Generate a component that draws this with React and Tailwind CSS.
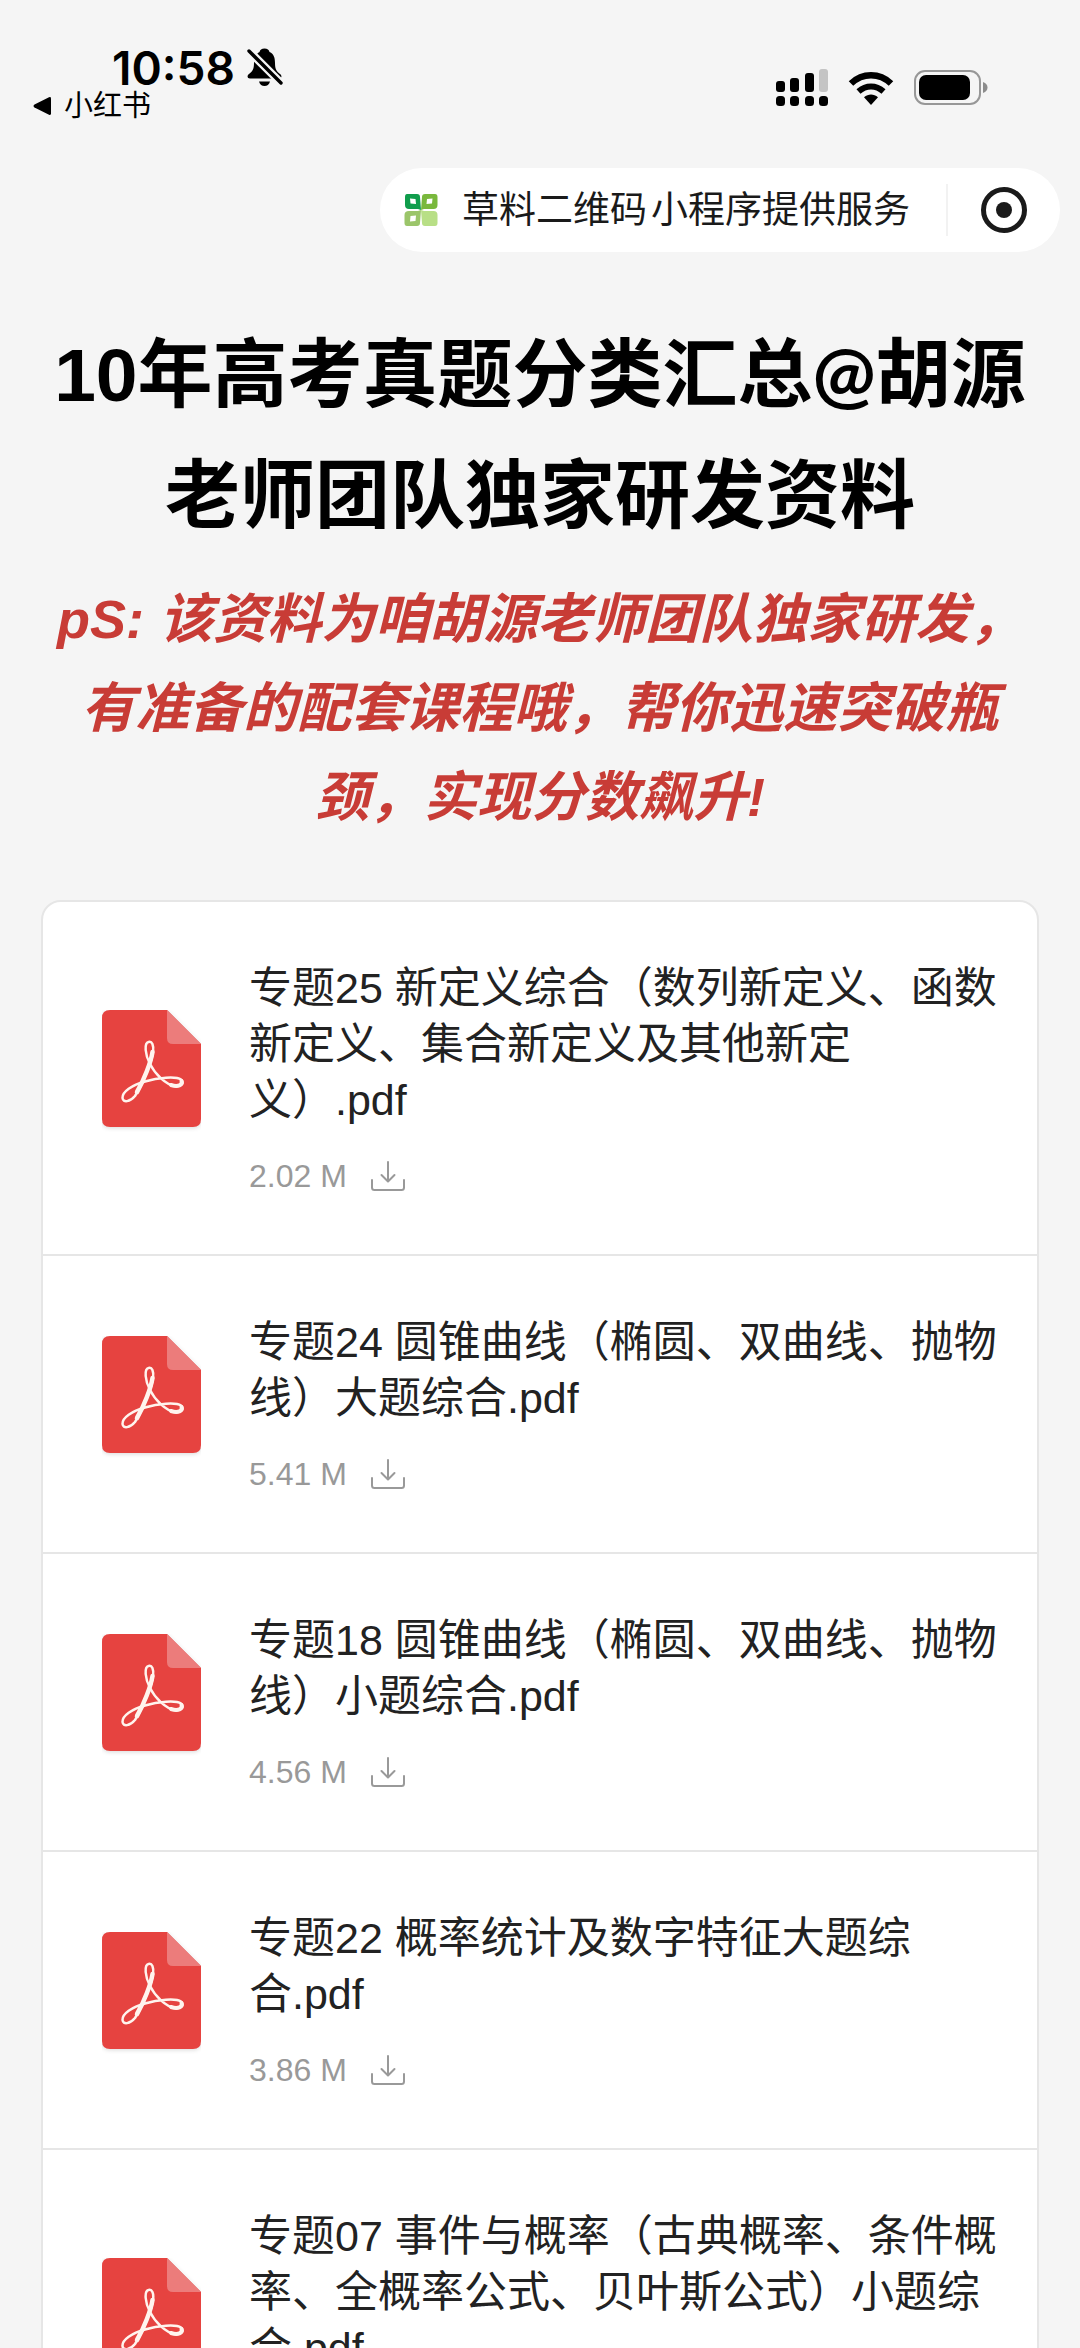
const files = [
  { name: "专题25 新定义综合（数列新定义、函数新定义、集合新定义及其他新定义）.pdf", size: "2.02 M" },
  { name: "专题24 圆锥曲线（椭圆、双曲线、抛物线）大题综合.pdf", size: "5.41 M" },
  { name: "专题18 圆锥曲线（椭圆、双曲线、抛物线）小题综合.pdf", size: "4.56 M" },
  { name: "专题22 概率统计及数字特征大题综合.pdf", size: "3.86 M" },
  { name: "专题07 事件与概率（古典概率、条件概率、全概率公式、贝叶斯公式）小题综合.pdf", size: "2.97 M" },
];

const BellOff = () => (
  <svg width="36" height="40" viewBox="0 0 36 40" fill="currentColor" aria-hidden="true">
    <path d="M17.500 .5c3 0 4.500 1.500 5 3.500C27 6 28 10 28 15c0 6 1.500 8.500 5 11 2.500 2 1.500 4.500-1 4.500H3C.5 30.500-.5 28 2 26c3.500-2.500 5-5 5-11 0-5 2-9 5.500-11 .5-2 2-3.500 5-3.500z" />
    <path d="M12 33.500h11c-.8 3-2.800 4.500-5.500 4.500s-4.700-1.500-5.500-4.500z" />
    <path d="M0 1 36 37" stroke="#f5f5f5" strokeWidth="8" />
    <path d="M2 3 34 35" stroke="currentColor" strokeWidth="3.400" strokeLinecap="round" />
  </svg>
);

const Signal = () => (
  <svg width="52" height="38" viewBox="0 0 52 38" fill="currentColor" aria-hidden="true">
    <rect x="0" y="12" width="9" height="11" rx="3" />
    <rect x="14" y="9" width="9" height="14" rx="3" />
    <rect x="29" y="4" width="9" height="19" rx="3" />
    <rect x="43" y="0" width="9" height="23" rx="3" fill="#c4c4c4" />
    <rect x="0" y="27" width="9" height="10" rx="3.500" />
    <rect x="14" y="27" width="9" height="10" rx="3.500" />
    <rect x="29" y="27" width="9" height="10" rx="3.500" />
    <rect x="43" y="27" width="9" height="10" rx="3.500" />
  </svg>
);

const Wifi = () => (
  <svg width="46" height="34" viewBox="0 0 46 34" aria-hidden="true">
    <path d="M3 12.500C14.500 1.500 31.500 1.500 43 12.500" fill="none" stroke="currentColor" strokeWidth="6.500" />
    <path d="M10.500 20.500C18 13.700 28 13.700 35.500 20.500" fill="none" stroke="currentColor" strokeWidth="6" />
    <path d="M16 26.200C20.500 22.500 25.500 22.500 30 26.200L23 34z" fill="currentColor" />
  </svg>
);

const Battery = () => (
  <svg width="74" height="36" viewBox="0 0 74 36" aria-hidden="true">
    <rect x="1" y="1" width="65" height="33" rx="10" fill="none" stroke="#979797" strokeWidth="2" />
    <rect x="5" y="5" width="51" height="25" rx="7" fill="currentColor" />
    <path d="M69 12c3 1 4.500 3 4.500 5.500S72 22 69 23z" fill="#8c8c8c" />
  </svg>
);

const CloverLogo = () => (
  <svg width="34" height="34" viewBox="0 0 34 34" fillRule="evenodd" aria-hidden="true">
    <path fill="#109d4c" d="M3 1h10q3 0 3 3l1 13-3-1H5q-4 0-4-4V4q0-3 2-3zM6 5.500l.5 5L12 11l-.500-5z" />
    <path fill="#79b83c" d="M21 1h10q2.500 0 2.500 3v8q0 4-4 4H20l-3 1 1-13q0-3 3-3zM23 6l-.5 5 5.500-.5.5-5z" />
    <path fill="#9bc56a" d="M5 18h9l3-1-1 13q0 3-3 3H3q-2.500 0-2.500-3v-8q0-4 4.500-4zM6.500 23 6 28.500l5.500-.5.5-5.500z" />
    <path fill="#b8df86" d="M20 18h9.500q4 0 4 4v8q0 3-2.500 3H21q-3 0-3-3l-1-13z" />
  </svg>
);

const PdfIcon = () => (
  <svg className="shrink-0" width="99" height="140" viewBox="0 0 99 140" aria-hidden="true">
    <path d="M8 0H65L99 34V109Q99 117 91 117H8Q0 117 0 109V8Q0 0 8 0Z" fill="#e64340" className="drop-shadow-sm" />
    <path d="M65 0 99 34H71Q65 34 65 28Z" fill="#ec7c7b" />
    <g fill="none" stroke="#fff4ee" strokeLinecap="round" strokeLinejoin="round">
      <path
        strokeWidth="2.500"
        d="M46.500 32C42 33 43 45 48 54C53 64 64 75 73 76C80 77 82 72 79 69.500C74 66 56 67.500 43 71.500C30 75 20 82 20.500 88C21 93 28 92 33 86C40 75 50 52 51 42C52 35 50 31 46.500 32Z"
      />
      <path strokeWidth="4.500" d="M50.500 42C49 52 42 70 35 82" />
      <path strokeWidth="4" d="M69 75C76 77.500 81 75 79.500 71" />
    </g>
  </svg>
);

const DownloadIcon = () => (
  <svg width="34" height="30" viewBox="0 0 34 30" fill="none" stroke="currentColor" strokeWidth="2" strokeLinecap="round" strokeLinejoin="round" aria-hidden="true">
    <path d="M17 1v19M10.500 14 17 20.500 23.500 14M1 19v7.500Q1 29 3.500 29h27Q33 29 33 26.500V19" />
  </svg>
);

function StatusBar() {
  return (
    <header className="flex justify-between pl-8 pr-23 pt-12 text-black">
      <div>
        <div className="flex items-center gap-3 pl-20 h-10">
          <span className="font-['Inter',sans-serif] text-[46px] leading-10 font-semibold">10:58</span>
          <BellOff />
        </div>
        <a href="#" className="flex items-center gap-3 text-[29px] leading-9">
          <svg width="20" height="20" viewBox="0 0 20 20" fill="currentColor" aria-hidden="true">
            <path d="M17 1.200 2.500 8.500q-2 1.500 0 3L17 18.800q2 .7 2-1.300V2.500q0-2-2-1.300z" />
          </svg>
          小红书
        </a>
      </div>
      <div className="flex items-center gap-5 h-20">
        <Signal />
        <Wifi />
        <Battery />
      </div>
    </header>
  );
}

function ServiceCapsule() {
  return (
    <div className="flex justify-end px-5 mt-10">
      <div className="flex items-center h-[84px] rounded-full bg-white pl-6 pr-8">
        <CloverLogo />
        <div className="flex gap-1 ml-6 text-[37px] leading-none text-[#1a1a1a]">
          <span>草料二维码</span>
          <span>小程序提供服务</span>
        </div>
        <span className="ml-9 h-13 w-0.5 bg-[#f2f2f2]"></span>
        <button type="button" aria-label="关闭" className="ml-8">
          <svg width="48" height="48" viewBox="0 0 48 48" aria-hidden="true">
            <circle cx="24" cy="24" r="20.500" fill="none" stroke="#1a1a1a" strokeWidth="5" />
            <circle cx="24" cy="24" r="8" fill="#1a1a1a" />
          </svg>
        </button>
      </div>
    </div>
  );
}

function FileRow({ name, size }) {
  return (
    <li className="flex items-center gap-12 pl-[59px] pr-9 pt-[58px] pb-[54px] border-b-2 border-[#e6e6e6] last:border-b-0">
      <PdfIcon />
      <div className="flex-1">
        <h2 className="text-[43px] leading-14 text-[#222]">{name}</h2>
        <div className="flex items-center gap-6 h-12 mt-6 text-[#999]">
          <span className="text-[32px] leading-none">{size}</span>
          <button type="button" aria-label="下载">
            <DownloadIcon />
          </button>
        </div>
      </div>
    </li>
  );
}

export default function App() {
  return (
    <div lang="zh-CN" className="flex flex-col h-screen bg-[#f5f5f5] font-['Liberation_Sans','Noto_Sans_CJK_SC',sans-serif]">
      <StatusBar />
      <ServiceCapsule />
      <main className="flex-1 min-h-0 overflow-y-auto [scrollbar-width:none] px-[41px] pt-[60px]">
        <h1 className="text-center text-[75px] leading-[121px] font-bold text-black">
          10年高考真题分类汇总<span className="font-['Lato',sans-serif]">@</span>胡源
          <br />
          老师团队独家研发资料
        </h1>
        <p className="mt-[18px] text-center text-[54px] leading-[89px] font-bold italic text-[#c83c36]">
          pS: 该资料为咱胡源老师团队独家研发，
          <br />
          有准备的配套课程哦，帮你迅速突破瓶
          <br />
          颈，实现分数飙升!
        </p>
        <ul className="mt-[58px] rounded-[20px] border-2 border-[#e6e6e6] bg-white">
          {files.map((file) => (
            <FileRow key={file.name} name={file.name} size={file.size} />
          ))}
        </ul>
      </main>
    </div>
  );
}
